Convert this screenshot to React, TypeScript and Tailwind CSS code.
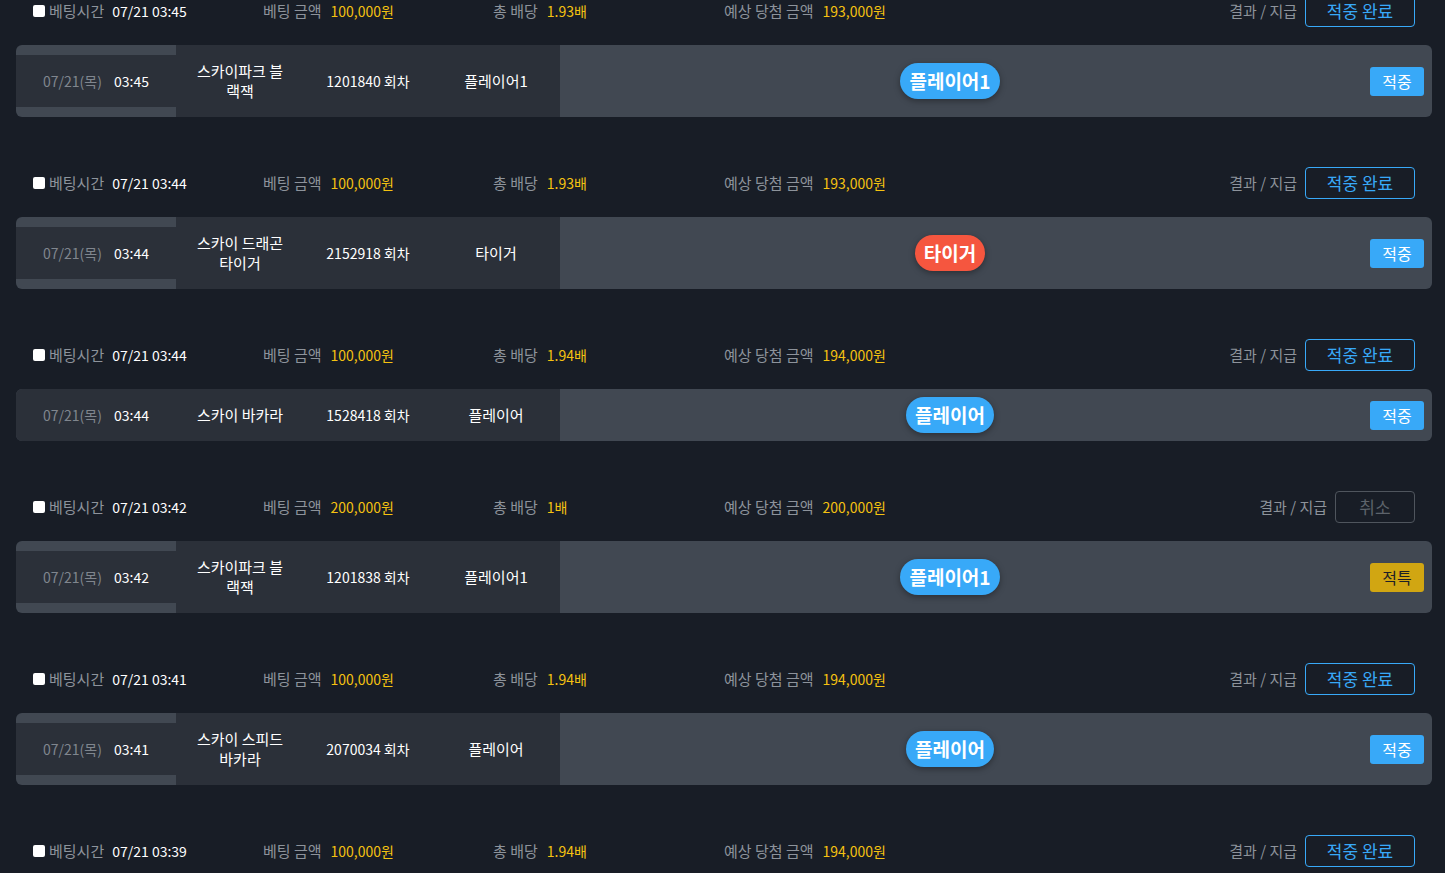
import React from 'react';

interface Bet {
  time: string;
  day: string;
  clock: string;
  amount: string;
  odds: string;
  payout: string;
  cancelled?: boolean;
  game: string;
  round: string;
  pick: string;
  result: string;
  resultColor: 'blue' | 'red';
  status: '적중' | '적특';
}

const bets: Bet[] = [
  { time: '07/21 03:45', day: '07/21(목)', clock: '03:45', amount: '100,000원', odds: '1.93배', payout: '193,000원', game: '스카이파크 블랙잭', round: '1201840 회차', pick: '플레이어1', result: '플레이어1', resultColor: 'blue', status: '적중' },
  { time: '07/21 03:44', day: '07/21(목)', clock: '03:44', amount: '100,000원', odds: '1.93배', payout: '193,000원', game: '스카이 드래곤 타이거', round: '2152918 회차', pick: '타이거', result: '타이거', resultColor: 'red', status: '적중' },
  { time: '07/21 03:44', day: '07/21(목)', clock: '03:44', amount: '100,000원', odds: '1.94배', payout: '194,000원', game: '스카이 바카라', round: '1528418 회차', pick: '플레이어', result: '플레이어', resultColor: 'blue', status: '적중' },
  { time: '07/21 03:42', day: '07/21(목)', clock: '03:42', amount: '200,000원', odds: '1배', payout: '200,000원', cancelled: true, game: '스카이파크 블랙잭', round: '1201838 회차', pick: '플레이어1', result: '플레이어1', resultColor: 'blue', status: '적특' },
  { time: '07/21 03:41', day: '07/21(목)', clock: '03:41', amount: '100,000원', odds: '1.94배', payout: '194,000원', game: '스카이 스피드 바카라', round: '2070034 회차', pick: '플레이어', result: '플레이어', resultColor: 'blue', status: '적중' },
  { time: '07/21 03:39', day: '07/21(목)', clock: '03:39', amount: '100,000원', odds: '1.94배', payout: '194,000원', game: '스카이 바카라', round: '1528410 회차', pick: '플레이어', result: '플레이어', resultColor: 'blue', status: '적중' },
];

const BetHeader: React.FC<{ bet: Bet }> = ({ bet }) => (
  <div className="flex items-center h-[32px] pl-[17px] pr-[17px] text-[14px]">
    <div className="w-[230px] flex items-center">
      <input type="checkbox" className="w-[12px] h-[12px] mr-[4px] appearance-none bg-white rounded-[2px]" />
      <span className="text-[#8d939b] text-[15px]">베팅시간</span>
      <span className="ml-[8px] text-white">{bet.time}</span>
    </div>
    <div className="w-[230px] flex items-center">
      <span className="text-[#8d939b] text-[15px]">베팅 금액</span>
      <span className="ml-[9px] text-[#f5c211]">{bet.amount}</span>
    </div>
    <div className="w-[231px] flex items-center">
      <span className="text-[#8d939b] text-[15px]">총 배당</span>
      <span className="ml-[9px] text-[#f5c211]">{bet.odds}</span>
    </div>
    <div className="flex-1 flex items-center">
      <span className="text-[#8d939b] text-[15px]">예상 당첨 금액</span>
      <span className="ml-[9px] text-[#f5c211]">{bet.payout}</span>
    </div>
    <span className="text-[#8d939b] text-[15px] mr-[8px]">결과 / 지급</span>
    {bet.cancelled ? (
      <button className="w-[80px] h-[32px] rounded-[4px] border border-[#4f555d] text-[#5d636b] text-[17px]">
        취소
      </button>
    ) : (
      <button className="w-[110px] h-[32px] rounded-[4px] border border-[#38a9f8] text-[#38a9f8] text-[17px]">
        적중 완료
      </button>
    )}
  </div>
);

const BetCard: React.FC<{ bet: Bet }> = ({ bet }) => (
  <div className="mt-[18px] flex rounded-[6px] overflow-hidden bg-[#414852] text-[15px] leading-[20px]">
    <div className="w-[160px] h-[52px] self-center bg-[#2b3039] flex items-center justify-center gap-[12px] text-[14px]">
      <span className="text-[#80868e]">{bet.day}</span>
      <span className="text-white">{bet.clock}</span>
    </div>
    <div className="w-[128px] bg-[#2b3039] px-[18px] py-[16px] flex items-center justify-center text-center text-white break-all">
      {bet.game}
    </div>
    <div className="w-[128px] bg-[#2b3039] py-[16px] flex items-center justify-center text-white text-[14px]">
      {bet.round}
    </div>
    <div className="w-[128px] bg-[#2b3039] py-[16px] flex items-center justify-center text-white">
      {bet.pick}
    </div>
    <div className="flex-1 flex items-center justify-center">
      <span
        className={`h-[36px] px-[9px] rounded-full flex items-center text-white text-[19px] font-bold shadow-[0_2px_6px_rgba(0,0,0,0.35)] ${
          bet.resultColor === 'red' ? 'bg-[#f5563f]' : 'bg-[#38a9f8]'
        }`}
      >
        {bet.result}
      </span>
    </div>
    <div className="w-[92px] flex items-center justify-end pr-[8px]">
      {bet.status === '적특' ? (
        <span className="w-[54px] h-[29px] rounded-[3px] bg-[#d1a612] text-[#1d2026] text-[16px] flex items-center justify-center">
          적특
        </span>
      ) : (
        <span className="w-[54px] h-[29px] rounded-[3px] bg-[#38a9f8] text-white text-[16px] flex items-center justify-center">
          적중
        </span>
      )}
    </div>
  </div>
);

export default function App() {
  return (
    <div
      className="h-screen overflow-hidden bg-[#181d26] flex flex-col"
      style={{ fontFamily: '"Noto Sans CJK KR", "Noto Sans", sans-serif' }}
    >
      <div className="-mt-[5px] pl-[16px] pr-[13px] flex flex-col">
        {bets.map((bet, i) => (
          <div key={i} className="mb-[50px]">
            <BetHeader bet={bet} />
            <BetCard bet={bet} />
          </div>
        ))}
      </div>
    </div>
  );
}
